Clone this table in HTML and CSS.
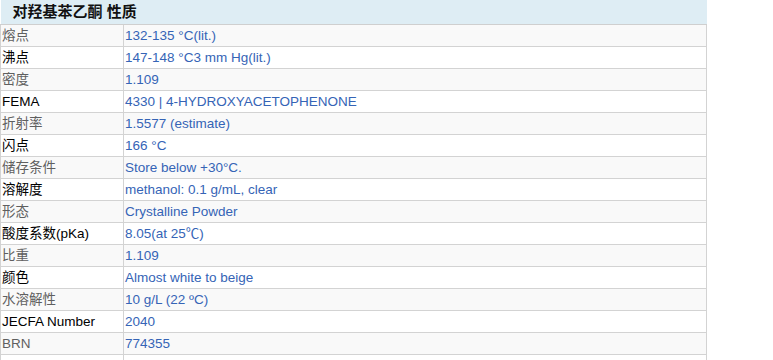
FILE: index.html
```html
<!DOCTYPE html>
<html lang="zh">
<head>
<meta charset="utf-8">
<title>对羟基苯乙酮 性质</title>
<link rel="stylesheet" href="styles.css">
</head>
<body>
<table class="props">
  <colgroup>
    <col class="col-k">
    <col class="col-v">
  </colgroup>
  <thead>
    <tr><th colspan="2" class="title">对羟基苯乙酮 性质</th></tr>
  </thead>
  <tbody>
    <tr class="odd"><td class="k">熔点</td><td class="v">132-135 °C(lit.)</td></tr>
    <tr><td class="k">沸点</td><td class="v">147-148 °C3 mm Hg(lit.)</td></tr>
    <tr class="odd"><td class="k">密度</td><td class="v">1.109</td></tr>
    <tr><td class="k">FEMA</td><td class="v">4330 | 4-HYDROXYACETOPHENONE</td></tr>
    <tr class="odd"><td class="k">折射率</td><td class="v">1.5577 (estimate)</td></tr>
    <tr><td class="k">闪点</td><td class="v">166 °C</td></tr>
    <tr class="odd"><td class="k">储存条件</td><td class="v">Store below +30°C.</td></tr>
    <tr><td class="k">溶解度</td><td class="v">methanol: 0.1 g/mL, clear</td></tr>
    <tr class="odd"><td class="k">形态</td><td class="v">Crystalline Powder</td></tr>
    <tr><td class="k">酸度系数(pKa)</td><td class="v">8.05(at 25℃)</td></tr>
    <tr class="odd"><td class="k">比重</td><td class="v">1.109</td></tr>
    <tr><td class="k">颜色</td><td class="v">Almost white to beige</td></tr>
    <tr class="odd"><td class="k">水溶解性</td><td class="v">10 g/L (22 ºC)</td></tr>
    <tr><td class="k">JECFA Number</td><td class="v">2040</td></tr>
    <tr class="odd"><td class="k">BRN</td><td class="v">774355</td></tr>
    <tr><td class="k"></td><td class="v"></td></tr>
  </tbody>
</table>
</body>
</html>
```

FILE: styles.css
```css
html, body {
  margin: 0;
  padding: 0;
  background: #ffffff;
}
body {
  font-family: "Liberation Sans", Arial, "Noto Sans CJK SC", sans-serif;
  font-size: 13.5px;
  color: #000;
}
.props {
  width: 707px;
  border-collapse: collapse;
  table-layout: fixed;
}
.col-k {
  width: 123px;
}
.props .title {
  height: 24px;
  padding: 0 0 0 12px;
  background: #deedf4;
  text-align: left;
  font-size: 15px;
  font-weight: bold;
  color: #111;
  line-height: 24px;
  border-bottom: 1px solid #cfcfcf;
}
.props td {
  height: 21px;
  padding: 0 0 0 1px;
  line-height: 21px;
  border-bottom: 1px solid #d3d3d3;
  white-space: nowrap;
  overflow: hidden;
}
.props .k {
  border-left: 1px solid #d3d3d3;
  border-right: 1px solid #d3d3d3;
  color: #000;
}
.props .v {
  color: #3564b6;
  border-right: 1px solid #d3d3d3;
}
.props tr.odd td {
  background: #f9f9f9;
}
.props tr.odd .k {
  color: #5f5f5f;
}
```
